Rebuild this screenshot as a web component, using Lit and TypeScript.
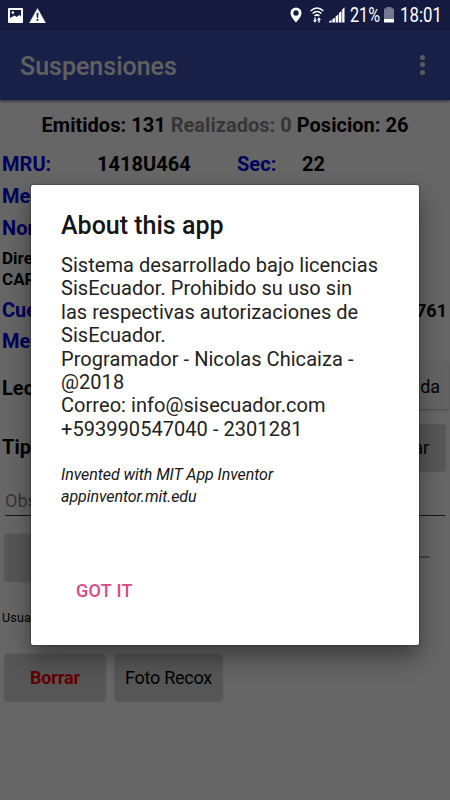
import { LitElement, html, css } from "lit";
import { customElement } from "lit/decorators.js";

@customElement("status-bar")
class StatusBar extends LitElement {
  static styles = css`
    :host { display: flex; align-items: center; height: 30px; padding: 0 9px 0 8px; background: #141a40; color: #fff; box-sizing: border-box; }
    svg { display: block; flex: none; }
    .warn { margin-left: 6px; }
    .gap { flex: 1; }
    .wifi { margin-left: 8px; }
    .signal { margin-left: 5px; }
    .pct { font-size: 19.500px; margin-left: 5px; width: 32px; white-space: nowrap; }
    .time { font-size: 20px; margin-left: 6px; width: 41px; white-space: nowrap; }
    .pct span, .time span { display: inline-block; transform-origin: 0 50%; }
    .pct span { transform: scaleX(0.83); }
    .time span { transform: scaleX(0.84); }
    .bat { margin-left: 2px; }
  `;
  render() {
    return html`
      <svg width="15" height="15" viewBox="0 0 15 15"><rect width="15" height="15" rx="1" fill="#fff"/><path d="M2 2h11v6.500L11.500 7 8.500 9 6.500 7.500 2 10z" fill="#141a40"/><circle cx="4.800" cy="4.600" r="1.300" fill="#fff"/></svg>
      <svg class="warn" width="17" height="15" viewBox="0 0 17 15"><path d="M8.500.5 16.500 15H.5z" fill="#fff" stroke="#fff" stroke-linejoin="round" stroke-width=".5"/><path d="M7.500 5h2l-.4 5H7.900z M7.600 11h1.800v1.800H7.600z" fill="#141a40"/></svg>
      <div class="gap"></div>
      <svg width="12" height="16" viewBox="0 0 12 16"><path fill="#fff" fill-rule="evenodd" d="M6 .5a5.500 5.500 0 0 0-5.500 5.500C.5 10 6 15.500 6 15.500S11.500 10 11.500 6A5.500 5.500 0 0 0 6 .5zM6 3.300a2.700 2.700 0 1 1 0 5.400 2.700 2.700 0 0 1 0-5.400z"/></svg>
      <svg class="wifi" width="14" height="16" viewBox="0 0 14 16" fill="none" stroke="#fff"><path stroke-width="1.600" d="M.6 4Q7-2 13.400 4M2.600 6.500Q7 2.500 11.400 6.500M4.600 9Q7 6.800 9.400 9"/><path fill="#fff" stroke="none" d="M4.300 10.500h1.400V13H7l-2 2.700L3 13h1.300zM8.300 15.500h1.400V13H11L9 10.300 7 13h1.300z"/></svg>
      <svg class="signal" width="16" height="16" viewBox="0 0 16 16" fill="#fff"><path d="M0 15.500v-1l2.600-1.500v2.500zM3.300 15.500V12.500l2.600-2v5zM6.600 15.500V9.500l2.600-2v8zM9.900 15.500V6l2.600-2v11.500zM13.200 15.500V2.500l2.300-2.200v15.200z"/></svg>
      <div class="pct"><span>21%</span></div>
      <svg class="bat" width="10" height="16" viewBox="0 0 10 16"><path d="M2.500 0h5v1.500H10V12H0V1.500h2.500z" fill="#757891"/><path d="M0 12h10v3.500H0z" fill="#fff"/></svg>
      <div class="time"><span>18:01</span></div>
    `;
  }
}

@customElement("about-dialog")
class AboutDialog extends LitElement {
  static styles = css`
    :host { display: block; box-sizing: border-box; width: 388px; height: 460px; padding: 26px 30px 0; background: #fff; color: #151515; border-radius: 2px; box-shadow: 0 12px 24px rgba(0,0,0,.42), 0 0 2px rgba(0,0,0,.7); }
    h1 { margin: 0; font-size: 25px; line-height: 30px; font-weight: 500; }
    .body { margin-top: 13px; font-size: 20px; line-height: 23.400px; letter-spacing: .05px; white-space: nowrap; color: #222; }
    .credit { margin-top: 23px; font-size: 16px; line-height: 22px; font-style: italic; letter-spacing: -.06px; white-space: nowrap; }
    .ok { margin: 72px 0 0 15px; font-size: 18px; line-height: 22px; font-weight: 500; letter-spacing: .3px; color: #da4a85; }
  `;
  render() {
    return html`
      <h1>About this app</h1>
      <div class="body">Sistema desarrollado bajo licencias<br>SisEcuador. Prohibido su uso sin<br>las respectivas autorizaciones de<br>SisEcuador.<br>Programador - Nicolas Chicaiza -<br>@2018<br>Correo: info@sisecuador.com<br>+593990547040 - 2301281</div>
      <div class="credit">Invented with MIT App Inventor<br>appinventor.mit.edu</div>
      <div class="ok">GOT IT</div>
    `;
  }
}

@customElement("app-root")
class AppRoot extends LitElement {
  static styles = css`
    :host { display: block; position: relative; width: 450px; height: 800px; overflow: hidden; background: #fff; color: #000; font-family: Roboto, "Liberation Sans", sans-serif; }
    .bar { display: flex; align-items: center; justify-content: space-between; height: 70px; box-sizing: border-box; padding: 3px 25px 0 20px; background: #3f51b5; color: #efefef; font-size: 25px; font-weight: 500; box-shadow: 0 1px 3px rgba(40,60,120,.8); }
    .dots { display: grid; gap: 2.500px; margin-bottom: 4px; }
    .dots i { width: 5px; height: 5px; border-radius: 50%; background: #e4e4e4; }
    .form { display: flex; flex-direction: column; font-weight: 700; font-size: 20px; letter-spacing: .03px; white-space: nowrap; }
    .counts { height: 48px; line-height: 50px; text-align: center; }
    .counts span { color: #888; }
    .row { display: flex; align-items: center; height: 32px; padding-left: 2px; }
    .b { color: #0000e8; }
    .mru { width: 95px; } .code { width: 140px; } .sec { width: 65px; }
    .addr { font-size: 17px; line-height: 21px; height: 50px; padding: 4px 0 0 2px; box-sizing: border-box; }
    .end { margin-left: auto; font-size: 18px; padding-right: 3px; }
    .btn { display: flex; align-items: center; justify-content: center; height: 46px; border-radius: 2px; background: #d6d6d7; box-shadow: 0 1px 3px rgba(0,0,0,.3); font-size: 18px; font-weight: 400; letter-spacing: -.1px; }
    .right { margin-left: auto; width: 90px; box-sizing: border-box; justify-content: flex-end; }
    .light { background: #fbfbfb; padding-right: 9px; margin-right: 1px; }
    .grey { padding-right: 16px; margin-right: 5px; }
    .r5 { height: 30px; } .lec { height: 60px; } .tip { height: 62px; }
    .lec span { padding-top: 4px; }
    .obs { display: flex; align-items: center; margin: 8px 5px 0; height: 29px; border-bottom: 1.500px solid #333; font-size: 18px; font-weight: 400; color: #888; }
    .slide { display: flex; align-items: center; justify-content: space-between; margin: 18px 20px 0 5px; height: 46px; }
    .slide .btn { width: 100px; }
    .track { width: 60px; height: 2px; background: #aaa; }
    .user { height: 74px; line-height: 75px; padding-left: 2px; font-size: 12.500px; font-weight: 400; letter-spacing: .2px; }
    .actions { display: flex; gap: 10px; padding-left: 5px; }
    .actions .btn { letter-spacing: -.25px; }
    .actions .del { width: 100px; color: #f50000; font-weight: 700; letter-spacing: -.1px; } .foto { width: 107px; }
    .scrim { position: absolute; inset: 0; background: rgba(0,0,0,.6); }
    status-bar { position: relative; z-index: 1; }
    about-dialog { position: absolute; left: 31px; top: 185px; }
  `;
  render() {
    return html`
      <status-bar></status-bar>
      <div class="bar">Suspensiones<div class="dots"><i></i><i></i><i></i></div></div>
      <div class="form">
        <div class="counts">Emitidos: 131 <span>Realizados: 0</span> Posicion: 26</div>
        <div class="row"><div class="b mru">MRU:</div><div class="code">1418U464</div><div class="b sec">Sec:</div><div>22</div></div>
        <div class="row b">Me</div>
        <div class="row b">Nom</div>
        <div class="addr">Dire<br>CAR</div>
        <div class="row"><div class="b">Cue</div><div class="end">761</div></div>
        <div class="row r5 b">Me</div>
        <div class="row lec"><span>Lec</span><div class="btn right light">da</div></div>
        <div class="row tip">Tip<div class="btn right grey">ar</div></div>
        <div class="obs">Obs</div>
        <div class="slide"><div class="btn"></div><div class="track"></div></div>
        <div class="user">Usua</div>
        <div class="actions"><div class="btn del">Borrar</div><div class="btn foto">Foto Recox</div></div>
      </div>
      <div class="scrim"></div>
      <about-dialog></about-dialog>
    `;
  }
}
